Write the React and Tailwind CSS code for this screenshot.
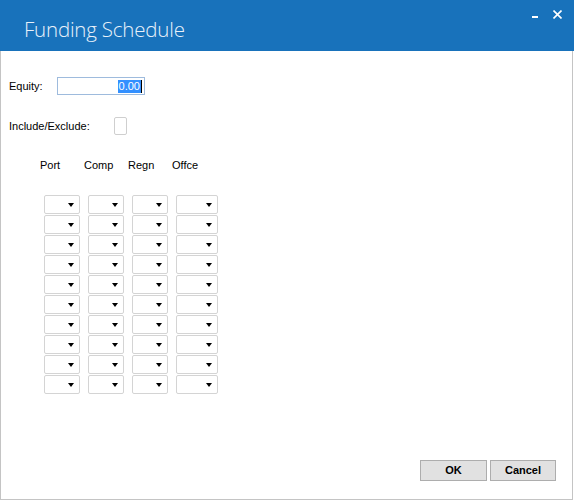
import React from "react";

const rows = Array.from({ length: 10 }, (_, i) => i);
const cols = [
  { key: "port", label: "Port", w: "w-[36px]" },
  { key: "comp", label: "Comp", w: "w-[36px]" },
  { key: "regn", label: "Regn", w: "w-[36px]" },
  { key: "offce", label: "Offce", w: "w-[42px]" },
];

const Combo = ({ w }) => (
  <div
    className={`${w} h-[19px] bg-white border border-[#d4d4d4] rounded-[2px] flex items-center justify-end pr-[5px]`}
  >
    <span className="w-0 h-0 border-l-[3.5px] border-r-[3.5px] border-t-[4px] border-l-transparent border-r-transparent border-t-black" />
  </div>
);

export default function App() {
  return (
    <div
      className="w-[574px] h-[501px] bg-white flex flex-col text-[11px] text-black"
      style={{ fontFamily: '"Liberation Sans", Arial, sans-serif' }}
    >
      {/* title bar */}
      <div className="h-[51px] bg-[#1872bb] flex items-start justify-between shrink-0">
        <div
          className="pl-[24px] pt-[14px] text-[20.5px] font-light text-[#e8f1fa] tracking-[-0.2px]"
          style={{ fontFamily: '"Open Sans", "Noto Sans", sans-serif' }}
        >
          Funding Schedule
        </div>
        <div className="flex items-start pt-[10px] pr-[12px] gap-[15px] text-white">
          <span className="mt-[6px] w-[6px] h-[2px] bg-white" />
          <svg width="9" height="9" viewBox="0 0 9 9" className="block">
            <path d="M0.5 0.5 L8.5 8.5 M8.5 0.5 L0.5 8.5" stroke="white" strokeWidth="1.6" />
          </svg>
        </div>
      </div>

      {/* body */}
      <div className="flex-1 flex flex-col border-x border-b border-[#c4c4c4] mr-[1px] mb-[1px]">
        <div className="pl-[8px]">
          <div className="mt-[26px] flex items-center">
            <span className="w-[48px]">Equity:</span>
            <div className="w-[88px] h-[18px] border border-[#9ebbdd] flex items-center justify-end pr-[2px]">
              <span className="bg-[#3390ff] text-white leading-[13px] px-[1px]">0.00</span>
              <span className="w-[1px] h-[13px] bg-black" />
            </div>
          </div>

          <div className="mt-[22px] flex items-center">
            <span className="w-[105px]">Include/Exclude:</span>
            <div className="w-[13px] h-[18px] border border-[#cfcfcf] rounded-[2px] bg-white" />
          </div>

          <div className="mt-[24px] pl-[35px] flex gap-[8px]">
            {cols.map((c) => (
              <div key={c.key} className={`${c.w} -ml-[4px] mr-[4px] leading-[13px]`}>
                {c.label}
              </div>
            ))}
          </div>

          <div className="mt-[23px] pl-[35px] flex flex-col gap-[1px]">
            {rows.map((r) => (
              <div key={r} className="flex gap-[8px]">
                {cols.map((c) => (
                  <Combo key={c.key} w={c.w} />
                ))}
              </div>
            ))}
          </div>
        </div>

        <div className="mt-auto flex justify-end gap-[3px] pr-[16px] pb-[18px]">
          <button className="w-[67px] h-[21px] bg-[#e1e1e1] border border-[#adadad] font-bold text-[11px]">
            OK
          </button>
          <button className="w-[66px] h-[21px] bg-[#e1e1e1] border border-[#adadad] font-bold text-[11px]">
            Cancel
          </button>
        </div>
      </div>
    </div>
  );
}
